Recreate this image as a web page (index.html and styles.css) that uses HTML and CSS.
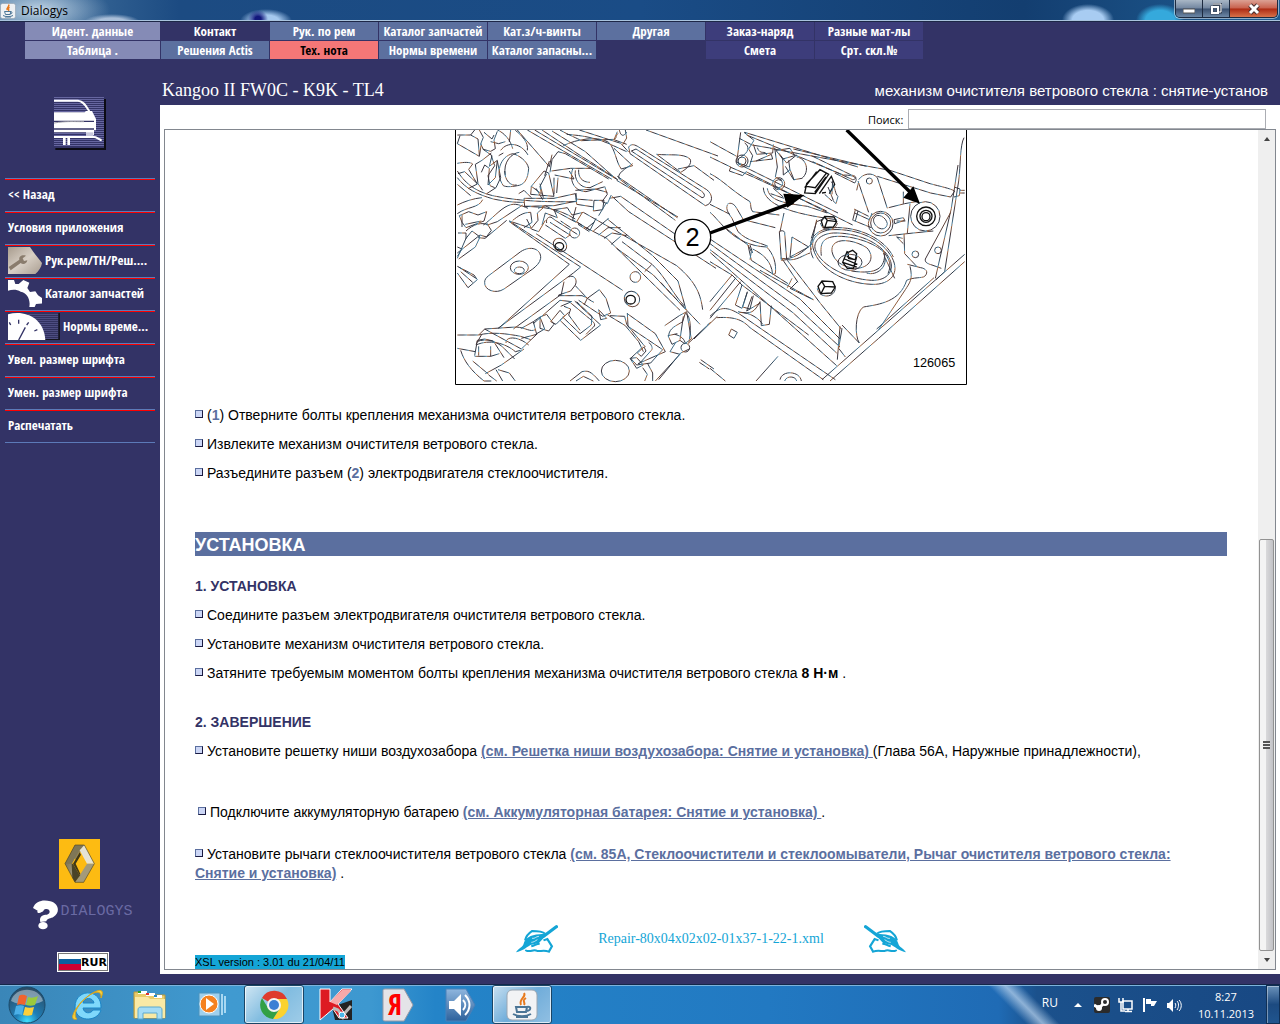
FILE: index.html
```html
<!DOCTYPE html>
<html lang="ru">
<head>
    <meta charset="UTF-8">
    <meta name="viewport" content="width=device-width, initial-scale=1.0">
    <title>Dialogys</title>
    <link rel="stylesheet" href="styles.css">
</head>
<body>
    <header class="titlebar">
        <svg class="java-small" viewBox="0 0 32 32" aria-hidden="true">
            <rect x="1" y="1" width="30" height="30" rx="4" fill="#eef1f4" stroke="#8795a5"/>
            <path d="M17 3c4 4-6 6-2 11M19 8c-5 3 0 4-2 8" fill="none" stroke="#e8791c" stroke-width="3"/>
            <path d="M9 17h13l-2 6h-9zM21 18c5-1 4 4-1 4M6 25c5 3 15 3 20 0M10 28h12" fill="none" stroke="#4b7596" stroke-width="2"/>
        </svg>
        <span class="titlebar-text">Dialogys</span>
        <div class="window-controls">
            <button type="button" class="win-btn" aria-label="Minimize">
                <svg width="12" height="12" viewBox="0 0 12 12"><rect x="0" y="6" width="12" height="4" fill="#fff" stroke="#555"/></svg>
            </button>
            <button type="button" class="win-btn" aria-label="Restore">
                <svg width="12" height="12" viewBox="0 0 12 12"><path d="M3 1h8v8H9M2 4h6v6H2z" fill="none" stroke="#3a4658" stroke-width="3"/><path d="M3 1h8v8H9" fill="none" stroke="#fff"/><path d="M2 4h6v6H2z" fill="none" stroke="#fff" stroke-width="2"/></svg>
            </button>
            <button type="button" class="win-btn win-close" aria-label="Close">
                <svg width="12" height="12" viewBox="0 0 12 12"><path d="M2 2l8 8M10 2l-8 8" stroke="#4a3030" stroke-width="5"/><path d="M2 2l8 8M10 2l-8 8" stroke="#fff" stroke-width="3"/></svg>
            </button>
        </div>
    </header>

    <nav class="tabs">
        <button type="button" class="tab tab-light">Идент. данные</button>
        <button type="button" class="tab tab-dark">Контакт</button>
        <button type="button" class="tab">Рук. по рем</button>
        <button type="button" class="tab">Каталог запчастей</button>
        <button type="button" class="tab">Кат.з/ч-винты</button>
        <button type="button" class="tab">Другая</button>
        <button type="button" class="tab tab-violet">Заказ-наряд</button>
        <button type="button" class="tab tab-violet">Разные мат-лы</button>
        <button type="button" class="tab tab-light row-start">Таблица .</button>
        <button type="button" class="tab">Решения Actis</button>
        <button type="button" class="tab tab-active">Тех. нота</button>
        <button type="button" class="tab">Нормы времени</button>
        <button type="button" class="tab">Каталог запасны...</button>
        <button type="button" class="tab tab-violet tab-estimate">Смета</button>
        <button type="button" class="tab tab-violet">Срт. скл.№</button>
    </nav>

    <div class="workspace">
        <aside class="sidebar">
            <svg class="car-icon" width="52" height="53" viewBox="0 0 156 159" aria-hidden="true">
                <path d="M4 6h152v153H4z" fill="#0c0c14"/>
                <path d="M0 0h150v153H0z" fill="#333366"/>
                <path d="M0 1.5h150M0 7.5h150M0 13.5h150M0 19.5h150M0 25.5h150M0 31.5h150M0 37.5h150M0 43.5h150M0 49.5h150M0 55.5h150M0 61.5h150M0 67.5h150M0 73.5h150M0 79.5h150M0 85.5h150M0 91.5h150M0 97.5h150M0 103.5h150M0 109.5h150M0 115.5h150M0 121.5h150M0 127.5h150M0 133.5h150M0 139.5h150M0 145.5h150" stroke="#6666a0" stroke-width="3"/>
                <path d="M0 11h72c20 2 25 20 34 32" fill="none" stroke="#fff" stroke-width="6"/>
                <path d="M0 46h92l4-4h18l12 24v34h-6v14H96v-8H0z" fill="#fff"/>
                <path d="M0 73h120M0 96h120" stroke="#333366" stroke-width="4"/>
                <path d="M0 78c36-6 60-4 90-4" fill="none" stroke="#a0a0a8" stroke-width="3"/>
                <path d="M96 106h22v12H96z" fill="#c8c8dc"/>
                <path d="M0 120h120c8 0 12 6 20 8v4" fill="none" stroke="#fff" stroke-width="6"/>
                <path d="M31 122v22M44 122v22" stroke="#fff" stroke-width="8"/>
            </svg>

            <div class="side-menu">
                <button type="button" class="side-btn">&lt;&lt; Назад</button>
                <button type="button" class="side-btn">Условия приложения</button>
                <button type="button" class="side-btn">
                    <svg width="34" height="27" viewBox="0 0 102 81" aria-hidden="true">
                        <defs><linearGradient id="paper" x1="0" y1="0" x2="1" y2="1"><stop offset="0" stop-color="#a89c8e"/><stop offset=".5" stop-color="#d8cfc5"/><stop offset="1" stop-color="#a99d90"/></linearGradient></defs>
                        <path d="M0 0h66c10 16 22 30 36 48-2 14-10 24-20 33H0z" fill="url(#paper)"/>
                        <path d="M2 60l32-22c-2-10 8-16 20-12l-10 8 4 8 10-2c-2 12-14 14-20 8L8 70z" fill="#8a7c6d"/>
                    </svg>
                    Рук.рем/ТН/Реш....
                </button>
                <button type="button" class="side-btn">
                    <svg width="34" height="27" viewBox="0 0 102 81" aria-hidden="true">
                        <path d="M0 0h18l4 12h10l14-12 18 8-6 16 8 12 16-2 8 12 18 12-2 12-22 2-4 9H64c4-22-6-42-26-46C26 27 12 28 0 32z" fill="#fff"/>
                    </svg>
                    Каталог запчастей
                </button>
                <button type="button" class="side-btn">
                    <svg width="52" height="27" viewBox="0 0 156 81" aria-hidden="true">
                        <path d="M60 0h90v78H60z" fill="#2b2b56"/>
                        <path d="M60 4h90M60 10h90M60 16h90M60 22h90M60 28h90M60 34h90M60 40h90M60 46h90M60 52h90M60 58h90M60 64h90M60 70h90M60 76h90" stroke="#55558c" stroke-width="3"/>
                        <path d="M151 0h5v81H60v-3h91z" fill="#14141f"/>
                        <path d="M0 4C50-10 108 14 112 81H0z" fill="#fff"/>
                        <path d="M32 81l20-38M32 20v12M62 28l-6 8M4 28l4 8M88 50l-9 4" stroke="#333366" stroke-width="4"/>
                    </svg>
                    Нормы време...
                </button>
                <button type="button" class="side-btn">Увел. размер шрифта</button>
                <button type="button" class="side-btn">Умен. размер шрифта</button>
                <button type="button" class="side-btn">Распечатать</button>
            </div>

            <div class="brand">
                <svg class="renault" width="41" height="50" viewBox="0 0 123 150" role="img" aria-label="Renault">
                    <defs><linearGradient id="metal" x1="0" y1="0" x2="1" y2="1"><stop offset="0" stop-color="#6b6143"/><stop offset="1" stop-color="#b9b296"/></linearGradient></defs>
                    <path d="M0 0h123v150H0z" fill="#fdbb12"/>
                    <path d="M48 18L18 74l30 56 9-18-19-38 24-46z" fill="url(#metal)"/>
                    <path d="M48 18h28L52 62l-7-6 14-26z" fill="#8d835f"/>
                    <path d="M48 18h28l8 20-22-6-20 36-4 6-20 0z" fill="#7f7656"/>
                    <path d="M76 18l30 56H84L62 34z" fill="#e6e3d2"/>
                    <path d="M84 74h22l-32 56H48l12-18z" fill="#a39a7a"/>
                    <path d="M38 74h6l20 34-16 22-8-14z" fill="#4a4327"/>
                    <path d="M62 40l20 34-20 34-20-34z" fill="#fdbb12"/>
                    <path d="M62 40l4 7-16 27 14 30-2 4-20-34z" fill="#3f3717"/>
                    <path d="M48 18h28l30 56-32 56H48L18 74z" fill="none" stroke="#54481f" stroke-width="2"/>
                </svg>
                <div class="dialogys">
                    <svg width="26" height="30" viewBox="0 0 78 90" aria-hidden="true">
                        <path d="M0 24C8 2 32-2 52 4c26 6 30 34 10 46-8 6-20 4-22 14l-18 2c-4-14 4-22 20-22 14-4 8-20-6-16-6 2-2 6-10 8-8 6-16 2-12-4z" fill="#fff"/>
                        <ellipse cx="30" cy="77" rx="14" ry="11" fill="#fff"/>
                    </svg>
                    <span class="dialogys-text">DIALOGYS</span>
                </div>
                <button type="button" class="currency"><span class="flag"></span>RUR</button>
            </div>
        </aside>

        <div class="main">
            <div class="doc-title">
                <h1 class="vehicle">Kangoo II FW0C - K9K - TL4</h1>
                <span class="subject">механизм очистителя ветрового стекла : снятие-установ</span>
            </div>
            <div class="panel">
                <form class="search">
                    <label for="search">Поиск:</label>
                    <input type="text" id="search" name="search">
                </form>
                <div class="viewer">
                    <main class="document">
                        <svg class="figure" viewBox="15 15 1536 765" role="img" aria-label="126065">
                            <defs>
                                <linearGradient id="ink" gradientUnits="userSpaceOnUse" x1="0" y1="0" x2="24" y2="14" spreadMethod="repeat">
                                    <stop offset="0" stop-color="#a8683c"/>
                                    <stop offset=".35" stop-color="#40343a"/>
                                    <stop offset=".65" stop-color="#2f3a48"/>
                                    <stop offset="1" stop-color="#4a86a8"/>
                                </linearGradient>
                            </defs>
                            <g class="ink">
                                <path d="M22 30h40l12-15M30 32l-8 24 66 38 6-38M62 30l22 12 4 48M88 15l12 22-8 20 8 16 22 6 14-8-4-26 10-26M102 22l24 20 6-12M122 50l24 6 20-6M98 72l28 20-8 32 24-18-6 52-22 22 4-50-14-10-10 22M76 118l20-12 28-22M76 118l8 58 14 20M124 92l10 30-20 30 6 30 14 6M142 108l10 50-14 30-28 18M182 15l-4 36M142 15c20 8 40 30 46 56M232 76c4-24-16-44-36-60"/>
                                <path d="M152 76c20-28 62-22 82 14M146 92l14-8M160 182c-26-36-10-88 28-96 18 4 44 22 48 44-2 34-14 50-34 52-20 4-34 4-42 0zM166 150c-8-40 20-66 42-68M164 138c0 28 18 46 36 42"/>
                                <path d="M22 115c20-4 40-4 46 2l-12 16 26 44-28 14M22 138c20 32 48 60 106 74 60 12 120 20 250 18M22 158c26 34 60 50 108 64 40 8 60 10 92 10M24 146l20-6 38 36M22 178l40 34M206 206l16-10 22 22M22 240c20-10 48-20 74-22M22 266c30-22 64-16 76-42M222 220h90l64-14 4 22-68 14-88 2zM220 244c60 2 100 4 156 38"/>
                                <path d="M28 272l28-12 28 10 26-10-8 28-54 20-12-16zM36 306v-36M46 298l48-10M48 318c20-20 50-28 64-18l30-10 76-50M100 300c26-18 50-48 74-58 22-10 40 0 60 8M22 400l26-60 18-22 24 18-14 30-50 36M22 384l68-54 20 6 60-50M84 338l22 2 18-24-14-22M24 324h24v18M22 366l14 6-14 22"/>
                                <path d="M244 184l38-46 14 6 16 70-70-6zM244 184l30 22-4-22 20-38M270 176l10 42M258 190l20 34M298 108l-14 44M300 142l6-38 18-24 22 6 130 76M304 138l58-8h60M314 150l58 12-14-24M312 158v50M324 158l-4 46M368 132c-10 30 0 66 40 68l54-14M376 136c-4 26 12 54 44 52l38-18M386 134c-2 22 10 38 34 38M376 196l60-4 36 10M378 204l2 34 52 8M464 184l8 24-16 22 16 6 12-26M432 226h30l-4 28-28 4zM470 232l-24 40M376 222l52 4"/>
                                <path d="M22 424l50 26 10 14-28 24M22 444l32 44M26 426l52 34M32 440l36 32"/>
                                <path d="M202 15l96 110 8-36M232 15l254 148M254 15l250 150M276 15l120 80c34 20 70 46 104 66M306 18l100 62 90 80M500 166l184 110M502 154l180 124M486 214l50 46 262 170M478 220l34-6 170 118"/>
                                <path d="M330 15c24 14 54 26 64 32l98-4c10-4 2-6 12-18M340 62c40-20 104-30 136-10 20 20 22 60 38 80l34-10M350 28c50 4 90 10 140 34l40 18M388 15l124 40 24 26M492 70l56 52M502 20l-10 24 38 14M526 15l4 24-12 20M508 15c4 20 14 20 22 6M588 15l216 78M620 88c40 4 80-4 100 14 8 14-10 30-28 40zM684 132l48-10 60 44M536 66c8-12 20-6 30 0l204 128c20 14 20 42-4 48L540 86zM544 78l14-6 196 126c12 8 12 20 2 20zM548 116c-20 14-50 30-40 46l168 124"/>
                                <path d="M178 288l66 22 20-24-2-22 18-16M178 288l214 138-22 18-226 166M178 290l180 128-210 190M188 286c16-12 30-24 54-24l4 30-24 16M244 310l-14-28M244 312l22 8 20-34M264 250l22-8 92 50M276 300l10-36 36 14-10-24 40-6 14 22 34-8 280 160c62 52 72 90 78 132M290 294c-4-16 12-24 20-12l72 46M286 300l60 40 14-10-60-38M362 308l-30-20M384 298l34 22M378 246l-10 38 42 26 24-20M396 264l-16 26 40 26 18-36M430 318l46-38M446 330l28-22h38M462 340l24-16 44 8M484 358l28-24M404 306l66 34 220 216M258 326l260 170M472 282l136 110 76 76 24 86-76-82M516 350l90 68c40 36 60 86 98 126M604 420l-20 20M500 370l110 80 140 148"/>
                                <circle cx="374" cy="324" r="15"/><circle cx="556" cy="456" r="16"/>
                                <ellipse cx="330" cy="360" rx="22" ry="18" transform="rotate(45 330 360)"/>
                                <ellipse cx="328" cy="364" rx="13" ry="11" class="bold"/>
                                <ellipse cx="546" cy="522" rx="24" ry="22" transform="rotate(45 546 522)"/>
                                <ellipse cx="542" cy="524" rx="14" ry="13" class="bold"/>
                                <path d="M116 452l96-72c30-20 62-8 60 20-2 14-14 24-24 32l-86 60c-24 16-60 4-58-20 0-8 4-14 12-20z"/>
                                <ellipse cx="208" cy="428" rx="27" ry="20"/><ellipse cx="208" cy="436" rx="15" ry="10"/>
                                <path d="M356 456c14-8 28 6 20 24l-14 18-36 12M342 470l-8 38-144 104M324 512h72c14 4 28 18 36 20M366 530l-36-4-80 70M376 482l36 38 36-26 20 26 14 44-24 10-72-48M412 520l-10 20M332 544l28-12 50 42c26 20 30 26 16 36l-18 18M342 544l20 8-6 18 34 46M356 562l-26 24 62 60 60-46-48-44-30-28M380 530l46 44-2 26-34 26-52-50M302 590l28-34 14 16-26 26zM270 576l20-8 22 30-16 20-26-8zM250 590l20-14 14 36-24 14M214 610l36-20 10 38-46 12"/>
                                <path d="M22 630h64l18-18 94-6c30 2 42 16 58 8M86 630c40-10 84-4 126 4l30 10M78 658l16-28M78 660c40-18 88-6 118 20l16-4M74 692l8-46 22-4 26 6 32 50M74 694h48l26-8M86 664v28M122 664v30M80 650c30-12 64 0 84 22l30 30M168 654c-2-22 38-20 68 6M104 612l110 60M214 672l48-46M22 670l54 10M32 676c10 32 30 60 70 92h22M68 708l48 40M106 746l48-26 68-48M138 734l20 34M144 734l34 10 18 24M116 750l24 18"/>
                                <ellipse cx="496" cy="738" rx="42" ry="32"/>
                                <path d="M360 768l36-28c18-4 26-2 52 28M378 768l22-14 30 14M446 554l24 26-18 4zM470 568l56 34 40 48 14 30M480 572l44 2 6 24 56 68M532 564l2 40 104 70-36 40-42 6-18-20 36-34M532 566l84 60 30 54-82 36M596 652c8 6 14 18 8 24l-36 40M540 700l20 30 20-10-20-22zM562 684l20-18 6 12-14 16zM578 728l14 20-8 20M592 714l16 30v24M656 632c2-24 24-30 42-42l8-26c20 10 16 62 10 92M710 560l14 82-20 14-14-10-24 12-12-26 28-6M674 628c20 4 30 16 32 28M700 574l-10 70M676 654l-16 26 30 8-74 80M718 672l-26 12-66 80M718 652l64-60-10 8M732 642l70-68M644 602l44-30 22-12M752 704l40 28M748 712l30 20"/>
                                <circle cx="706" cy="668" r="13"/>
                                <g transform="translate(780 0)">
                                    <path d="M0 50l80 44M84 116l300 148M0 96l62 30-4 12 40 14 10-12 320 160M60 126l70 30 220 102M104 22l340 104M110 30l290 120c20 0 50 4 34 24l-60-30M92 22l-12 90 38 14 10-34-12-20 16-26-30-24M88 40l38 20 60 10M104 54c16 10 12 30-10 40M130 58l10 30 48-4 2-26M142 68c8 24 24 6 28 22M120 110l68-8-4-14-46 20M194 68l8 58-6 30 20 10M198 76l42-6 14 22-36 10zM218 100l2 50 20-16 12 30 24-4c24-20 14-60-16-64M236 106l4 30M206 84l24 30 30-24M226 124l26 42M160 188c2 50 80 78 220 96M172 190c6 38 50 44 120 54l60 20M190 190l30 26M182 206l40 14M180 70l360 66 120 40c30 8 60 14 74 22l-12 18-60-12-160-50M250 72l220 52M304 92l120 58c22 4 12 14 4 14l-120-54"/>
                                    <circle cx="96" cy="108" r="18"/><circle cx="96" cy="108" r="12"/><circle cx="206" cy="176" r="18"/><circle cx="206" cy="176" r="12"/>
                                    <path class="bold" d="M284 204l6-28 40-42 26 14-40 58zM290 184l26 4 32-42M320 140l-36 48M328 206l36-52 10 24-16 28M348 156l-34 46M336 204l12-2"/>
                                    <path d="M364 170c14 20 10 36 20 44l-6 22-10-10M354 186l16 40M368 166l-2 42M344 208l22 20"/>
                                    <path d="M446 164c12-18 40-24 56-6l30 92M444 168l32 94M446 170l-6 26M432 252l44 22M434 264l44 20M430 286l54 22M436 254l-8 32M444 258l-8 30M478 286l8-22M536 248l48-12 34-6M600 236l-8 88M536 332l74-8 60-6M552 284l2 12 30-10-4-8zM560 288h26M580 200v36M582 326l2 60 38 40M578 340l-18-4 20 20"/>
                                    <circle cx="478" cy="168" r="9"/><circle cx="512" cy="296" r="37"/><circle cx="512" cy="294" r="30"/>
                                    <path d="M494 276c10-12 34 0 38 20-2 18-20 20-32 8-10-10-12-20-6-28z"/>
                                    <circle cx="646" cy="274" r="44"/><circle cx="648" cy="274" r="28" class="bold"/><circle cx="648" cy="274" r="18" class="bold"/><circle cx="648" cy="275" r="12" class="bold"/>
                                    <path d="M762 38c-12 22-10 80-16 130l-42 272-26 24M744 120l-20 130-48 210M732 186l18 6-2 20-16 4M750 196h14M750 204h14M722 262l-76 140c-2 10 6 14 20 18l28 10"/>
                                    <circle cx="616" cy="388" r="10"/><circle cx="684" cy="376" r="10"/>
                                    <path d="M310 372c-10-30 16-56 56-58 80-4 150 30 180 84 24 44-2 82-60 80-80-2-160-46-176-106z"/>
                                    <path d="M304 374c-12-34 20-62 64-66 80-4 156 34 182 88M316 374c-8-26 18-48 54-50 70-2 140 28 166 72 22 38-2 72-52 70-70-4-150-42-168-92zM334 392c-4-34 0-60 60-58 66 4 120 34 130 52 0 40-20 64-100 52M366 380c-6-44 60-40 104-12 26 26 12 62-34 62-40-4-64-22-70-50zM520 384c20 40-20 70-50 60M526 400l28 60M514 370c30 40 30 50 20 76"/>
                                    <path class="bold" d="M414 382l14-6 12 10-4 18-20-4zM410 394l28 12M404 402l38 16M398 412l42 14M412 378l-14 34 14 18h18l10-34"/>
                                    <ellipse cx="420" cy="412" rx="36" ry="24"/>
                                    <path class="bold" d="M334 288l10-14 28 2 8 14-10 16-30 2zM344 276l8 10 28 4M352 286l-8 22"/><path d="M332 294c4 28 46 24 50 0"/>
                                    <path class="bold" d="M324 484l12-16 32 2 8 16-12 18-32 2zM336 470l8 14 30 2M344 484l-10 20"/><path d="M322 490c4 32 54 30 54-2"/>
                                    <path d="M208 320c4-4 14-4 16 2l6 82-16 2zM222 264l-12 56M212 400c40 6 64-18 94-44M230 404c30 4 50-14 70-20M246 336l50 30-56 30zM304 340l16-50 20-8M320 284l-16 76M310 400c-10-20-8-30-8-40M232 406l62 80 38 50 62 76M214 398l50 74M264 468l-24 24M246 460l-14 28M150 436l160 88M240 490l70 34"/>
                                    <path d="M0 146c40 20 60 48 120 84 4 12 0 20 8 30l80 10M0 262c30 24 70 100 170 104 20 20 30 50 26 80l-8 2c-4-40-28-60-60-76M0 238l60 30M52 238c10-8 22 0 28 12l20 34 96 24M52 240c-6 14 6 28 14 40l18 40c30 30 60 30 90 44M114 360l10 20-4 24M120 360l8 24M50 312l64 48 10 46 110 70M0 342l270 180 120 120M0 356l260 190 130 120M0 374l250 190 130 120M0 382l380 340M0 410l66 40 30 30 200 150M66 450L0 530M78 458L0 556M92 470L0 580M96 480l-20 60 20 10 16-48M112 500l-14 46 22 6 10-40M126 514l-16 44 40-24M150 530l4 72 24-4 6-56M84 560c40 10 50 0 66-30M88 562c34 0 60 20 70 36M0 574c30-30 50-30 90-6l286 196M20 578c60-4 80 10 100 30l220 156M64 612l18 10-10 18-16-10zM204 694l-66 74M0 730l46 38M210 764c6-30 60-26 64 4M224 768c6-18 34-14 36 0M396 600l52 54M390 604l-8 100"/>
                                    <path d="M396 610l-10 60 20 26M448 654c-14-20-14-90 12-108 50-8 110-16 130-80 20-10 46-6 54-12 14-14 2-24-12-26l-40-10M600 424c10 40-2 50-14 70l-80 120M764 388l-428 376M764 410L506 640l-146 128M672 458L500 612"/>
                                </g>
                            </g>
                            <path d="M780 324l250-92M1190 15l190 186" stroke="#000" stroke-width="10"/>
                            <path d="M1064 210l-52 38-12-42zM1410 236l-50-18 30-34z"/>
                            <circle cx="728" cy="337" r="54" fill="#fff" stroke="#000" stroke-width="4"/>
                            <text class="callout" x="728" y="363">2</text>
                            <text class="fig-number" x="1389" y="726">126065</text>
                            <path d="M16.5 15v763.500h1533V15" fill="none" stroke="#000" stroke-width="3"/>
                        </svg>

                        <p class="step">(<b>1</b>) Отверните болты крепления механизма очистителя ветрового стекла.</p>
                        <p class="step">Извлеките механизм очистителя ветрового стекла.</p>
                        <p class="step">Разъедините разъем (<b>2</b>) электродвигателя стеклоочистителя.</p>

                        <h2>УСТАНОВКА</h2>

                        <h3>1. УСТАНОВКА</h3>
                        <p class="step">Соедините разъем электродвигателя очистителя ветрового стекла.</p>
                        <p class="step">Установите механизм очистителя ветрового стекла.</p>
                        <p class="step">Затяните требуемым моментом болты крепления механизма очистителя ветрового стекла <strong>8 Н·м</strong> .</p>

                        <h3 class="finish">2. ЗАВЕРШЕНИЕ</h3>
                        <p class="step">Установите решетку ниши воздухозабора <a href="#">(см. Решетка ниши воздухозабора: Снятие и установка) </a>(Глава 56A, Наружные принадлежности),</p>
                        <p class="step battery">Подключите аккумуляторную батарею <a href="#">(см. Аккумуляторная батарея: Снятие и установка) </a>.</p>
                        <p class="step wiper">Установите рычаги стеклоочистителя ветрового стекла <a href="#">(см. 85A, Стеклоочистители и стеклоомыватели, Рычаг очистителя ветрового стекла:<br>Снятие и установка)</a> .</p>

                        <div class="doc-nav">
                            <a href="#" aria-label="Назад">
                                <svg class="hand" viewBox="0 0 110 84" preserveAspectRatio="none"><use href="#hand"/></svg>
                            </a>
                            <span>Repair-80x04x02x02-01x37-1-22-1.xml</span>
                            <a href="#" aria-label="Вперед">
                                <svg class="hand" viewBox="0 0 110 84" preserveAspectRatio="none">
                                    <defs>
                                        <g id="hand">
                                            <path d="M106 5L72 34" stroke="#14a5d6" stroke-width="9" stroke-linecap="round"/>
                                            <path d="M0 82c6-12 18-16 20-26 4-16 16-26 42-28l12-2 4 6-18 22-22 6C24 70 16 78 0 82z" fill="#14a5d6"/>
                                            <path d="M24 46c2-12 10-22 18-28 18 0 28 2 34 8M72 46l10-4 12 22-8 16c-14-6-22 0-30-2-10-6-16 2-22 0-6 0-8 0-8-4M62 56c-10 0-12 6-22 8" fill="none" stroke="#14a5d6" stroke-width="6"/>
                                            <path d="M42 40c8 2 10-6 18-6M40 52c6 0 10-4 16-8" fill="none" stroke="#fff" stroke-width="2"/>
                                        </g>
                                    </defs>
                                    <use href="#hand" transform="matrix(-1 0 0 1 110 0)"/>
                                </svg>
                            </a>
                        </div>
                        <span class="version">XSL version : 3.01 du 21/04/11</span>
                    </main>
                    <div class="scrollbar">
                        <button type="button" class="scroll-arrow" aria-label="Вверх"><span class="arrow-up"></span></button>
                        <div class="scroll-track">
                            <div class="scroll-thumb"><span class="grip"></span></div>
                        </div>
                        <button type="button" class="scroll-arrow" aria-label="Вниз"><span class="arrow-down"></span></button>
                    </div>
                </div>
            </div>
        </div>
    </div>

    <footer class="taskbar">
        <button type="button" class="start" aria-label="Пуск">
            <svg width="38" height="38" viewBox="0 0 38 38">
                <defs><radialGradient id="orb" cx=".5" cy=".95" r=".9"><stop offset="0" stop-color="#3fe0ff"/><stop offset=".35" stop-color="#1f7fb8"/><stop offset="1" stop-color="#2a4c66"/></radialGradient></defs>
                <circle cx="19" cy="19" r="18" fill="url(#orb)" stroke="#1b4a6a"/>
                <path d="M3 15C7 0 31 0 35 15c-10 5-22 5-32 0z" fill="#fff" opacity=".4"/>
                <path d="M11 10c3-2 5-1 8 0l-2 9c-3-1-6-1-8 0z" fill="#f0642d"/>
                <path d="M20 11c3 1 6 1 10-1l-3 9c-3 1-6 1-9 0z" fill="#9bca3c"/>
                <path d="M8 20c3-1 6-1 8 0l-2 9c-3-1-5-1-8 0z" fill="#4bb0e8"/>
                <path d="M17 21c3 1 6 1 9 0l-2 8c-3 1-6 1-9 0z" fill="#fcd03b"/>
            </svg>
        </button>
        <button type="button" class="task" aria-label="Internet Explorer">
            <svg width="32" height="34" viewBox="0 0 32 34">
                <path d="M3 19c0-19 27-19 26 1H11c1 6 8 6 10 2h8c-4 13-26 12-26-3zM11 15h11c-1-6-10-6-11 0z" fill="#7fd8fb" stroke="#1b86c8"/>
                <path d="M5 31c-10 3-1-14 10-22C25 1 34-1 29 10c1-9-8-6-14-1C6 16 0 27 5 31z" fill="#fbd23c" stroke="#d8a51c"/>
            </svg>
        </button>
        <button type="button" class="task" aria-label="Проводник">
            <svg width="34" height="32" viewBox="0 0 34 32">
                <path d="M1 3h12l2 3h17v23H1z" fill="#e9cc6a" stroke="#b9983c"/>
                <path d="M5 2h9v3H5zM13 4h9v3h-9zM21 6h8v3h-8z" fill="#fff"/>
                <path d="M5 2h3v2H5z" fill="#2aa02a"/><path d="M13 4h3v2h-3z" fill="#d33"/><path d="M21 6h3v2h-3z" fill="#28c"/>
                <path d="M2 8h13l2 2h15v19H2z" fill="#f9e9a5"/>
                <path d="M5 30v-9c0-2 1-3 3-3h18c2 0 3 1 3 3v9h-5v-6H10v6z" fill="#a5dcf5" stroke="#5aa9d0"/>
            </svg>
        </button>
        <button type="button" class="task" aria-label="Media Player">
            <svg width="30" height="28" viewBox="0 0 30 28">
                <path d="M2 2h21v23H2z" fill="#9fd0ec" stroke="#4c93bd"/><path d="M25 3v21M28 5v17" stroke="#a8d8f2" stroke-width="2"/>
                <circle cx="12" cy="13" r="9" fill="#f58220" stroke="#fff"/><path d="M9 7l8 6-8 6z" fill="#fff"/>
            </svg>
        </button>
        <button type="button" class="task task-open" aria-label="Chrome">
            <svg width="30" height="30" viewBox="0 0 30 30">
                <path d="M15 15L3 8a14 14 0 0 1 25 1z" fill="#de3b2d"/>
                <path d="M15 9h13A14 14 0 0 1 14 29l7-11z" fill="#fbd22f"/>
                <path d="M3 8l6 10 12 0-7 11A14 14 0 0 1 3 8z" fill="#32a046"/>
                <circle cx="15" cy="15" r="7" fill="#f4f4f4"/><circle cx="15" cy="15" r="5" fill="#3b7fd4"/>
            </svg>
        </button>
        <button type="button" class="task" aria-label="Kaspersky">
            <svg width="34" height="34" viewBox="0 0 34 34">
                <path d="M13 19L33 12v20H16z" fill="#222"/>
                <path d="M1 1h10v13L23 1h10L19 16l10 14h-9l-6-9-13 11z" fill="#dd1a22" stroke="#fff"/>
                <path d="M18 17l14-14-1-1h-8L11 14z" fill="#f7a9a9"/>
                <path d="M14 20l5 2 6 9M25 26l7-8" fill="none" stroke="#bbb" stroke-width="3"/><circle cx="23" cy="27" r="3" fill="#4db7ea" stroke="#fff"/>
            </svg>
        </button>
        <button type="button" class="task" aria-label="Яндекс">
            <svg width="32" height="34" viewBox="0 0 32 34">
                <path d="M3 1h19l9 16-9 16H3c-2 0-2-1-2-2V3c0-1 0-2 2-2z" fill="#e4e4e8" stroke="#9a9aa5"/>
                <text class="ya" x="13" y="27">Я</text>
            </svg>
        </button>
        <button type="button" class="task" aria-label="Звук">
            <svg width="32" height="34" viewBox="0 0 32 34">
                <defs><linearGradient id="sound" x1="0" y1="0" x2="0" y2="1"><stop offset="0" stop-color="#8fb6de"/><stop offset="1" stop-color="#2d629c"/></linearGradient></defs>
                <path d="M2 1h20l9 16-9 16H2z" fill="url(#sound)" stroke="#4a80b8"/>
                <path d="M5 13h5l7-7v22l-7-7H5z" fill="#fff"/><path d="M19 12c3 3 3 7 0 10M21 7c6 6 6 14 0 20" fill="none" stroke="#fff" stroke-width="2"/>
            </svg>
        </button>
        <button type="button" class="task task-open" aria-label="Dialogys">
            <svg width="32" height="32" viewBox="0 0 32 32">
                <rect x="1" y="1" width="30" height="30" rx="5" fill="#f2f3f5" stroke="#9aa6b2"/>
                <path d="M18 4c3 4-6 6-3 12M20 9c-5 3 0 4-2 7" fill="none" stroke="#e8791c" stroke-width="2"/>
                <path d="M10 18h11l-1 5h-9zM21 18c5-1 4 4-1 4M7 25c5 3 13 3 18 0M10 28h12" fill="none" stroke="#4b7596" stroke-width="2"/>
            </svg>
        </button>

        <div class="tray">
            <span class="lang">RU</span>
            <span class="tray-arrow"></span>
            <svg width="16" height="16" viewBox="0 0 16 16" aria-hidden="true">
                <rect width="16" height="16" rx="2" fill="#2b2b2b"/>
                <circle cx="11" cy="5" r="3" fill="none" stroke="#fff" stroke-width="2"/><circle cx="5" cy="11" r="3" fill="#fff"/>
                <path d="M0 8l5 3 4-4" fill="none" stroke="#fff" stroke-width="3"/>
            </svg>
            <svg width="16" height="16" viewBox="0 0 16 16" aria-hidden="true">
                <path d="M5 4h9v8H5zM7 14.5h7M10 12v2" fill="none" stroke="#fff" stroke-width="1.5"/>
                <path d="M1 1v4h4V1M3 5v9h4" fill="none" stroke="#fff" stroke-width="1.5"/>
            </svg>
            <svg width="16" height="16" viewBox="0 0 16 16" aria-hidden="true">
                <path d="M2 1v14" stroke="#fff" stroke-width="2"/><path d="M4 2h5v2h6l-3 5H9V7H4z" fill="#fff"/>
            </svg>
            <svg width="16" height="16" viewBox="0 0 16 16" aria-hidden="true">
                <path d="M1 6h2l4-4v13l-4-4H1z" fill="#fff"/><path d="M9 6c1 1 1 3 0 5M11 4c2 2 2 6 0 9M13 3c3 3 3 8 0 11" fill="none" stroke="#fff"/>
            </svg>
            <time class="clock" datetime="2013-11-10T08:27">8:27<br>10.11.2013</time>
        </div>
        <button type="button" class="show-desktop" aria-label="Свернуть все окна"></button>
    </footer>
</body>
</html>
```

FILE: styles.css
```css
* {
    box-sizing: border-box;
}
body {
    margin: 0;
    min-height: 100vh;
    display: flex;
    flex-direction: column;
    background: #333366;
    font-family: "Liberation Sans", Arial, sans-serif;
    font-size: 14px;
}
button {
    margin: 0;
    padding: 0;
    border: none;
    background: none;
    font: inherit;
    color: inherit;
    cursor: pointer;
}
svg {
    display: block;
    flex: none;
}

/* window title */
.titlebar {
    display: flex;
    align-items: center;
    height: 22px;
    border-bottom: 1px solid #1d2747;
    box-shadow: inset 0 -1px #a9c3dd;
    background:
        radial-gradient(ellipse 70px 28px at 40px 10px, rgba(220, 234, 245, 0.8), transparent),
        radial-gradient(ellipse 28px 8px at 112px 22px, rgba(200, 215, 235, 0.8) 50%, transparent),
        radial-gradient(ellipse 10px 9px at 258px 19px, #12187c 30%, transparent),
        radial-gradient(ellipse 26px 12px at 266px 21px, #a5c8ee 50%, transparent),
        radial-gradient(ellipse 26px 16px at 1088px 20px, #a8ccf2 60%, transparent),
        radial-gradient(ellipse 24px 16px at 1160px 20px, #35a9dc 60%, transparent),
        linear-gradient(90deg, #4b7aa4, #1c4b82 14%, #1a4c86 50%, #133e70 80%, #1f5d93);
}
.java-small {
    width: 16px;
    height: 16px;
    margin: 0 5px 0 0;
}
.titlebar-text {
    font: 12px "Open Sans", "Noto Sans", sans-serif;
    color: #000;
}
.window-controls {
    display: flex;
    align-self: flex-start;
    margin: 0 2px 0 auto;
    border: 1px solid #1d2b40;
    border-top: none;
    border-radius: 0 0 5px 5px;
    box-shadow: 0 0 0 1px rgba(255, 255, 255, 0.5);
    overflow: hidden;
}
.win-btn {
    display: flex;
    align-items: center;
    justify-content: center;
    width: 27px;
    height: 17px;
    border-right: 1px solid #1d2b40;
    background: linear-gradient(#a9b7c6, #7286a0 48%, #3a506f 52%, #6d88a6);
}
.win-close {
    width: 47px;
    border-right: none;
    background: linear-gradient(#dca194, #c8604c 48%, #ad2a13 52%, #d8724a);
}

/* top tabs */
.tabs {
    display: grid;
    grid-template-columns: 135px repeat(7, 108px);
    grid-auto-rows: 18px;
    gap: 1px;
    padding: 0 25px;
}
.tab {
    overflow: hidden;
    background: #5c709f;
    color: #fff;
    font: bold 13px/18px "Open Sans Condensed", Roboto, sans-serif;
    white-space: nowrap;
}
.tab-light {
    background: #858bb6;
}
.tab-dark {
    background: #333366;
}
.tab-violet {
    background: #3d3d7b;
}
.tab-active {
    background: #f47777;
    color: #000;
}
.row-start {
    grid-column: 1;
}
.tab-estimate {
    grid-column: 7;
}

.workspace {
    flex: 1;
    display: flex;
}

/* left column */
.sidebar {
    flex: none;
    width: 160px;
    display: flex;
    flex-direction: column;
    padding: 38px 5px 12px;
}
.car-icon {
    margin: 0 0 28px 49px;
}
.side-menu {
    border-bottom: 1px solid #5c7ab8;
}
.side-btn {
    display: flex;
    align-items: center;
    gap: 3px;
    width: 100%;
    height: 33px;
    padding: 0 3px 2px;
    border-top: 1px solid #5c7ab8;
    box-shadow: inset 0 1px #ff0000;
    color: #fff;
    font: bold 13px "Open Sans Condensed", Roboto, sans-serif;
    white-space: nowrap;
}
.brand {
    display: flex;
    flex-direction: column;
    align-items: center;
    margin-top: auto;
    padding-left: 6px;
}
.renault {
    margin-right: 8px;
}
.dialogys {
    display: flex;
    align-items: flex-start;
    gap: 1px;
    margin: 11px 0 22px;
}
.dialogys-text {
    color: #6a6aa3;
    font: 15px/24px "Liberation Mono", monospace;
}
.currency {
    display: flex;
    align-items: center;
    width: 52px;
    height: 20px;
    border: 1px solid #fff;
    outline: 1px solid #777;
    outline-offset: -2px;
    background: #fff;
    color: #000;
    font: bold 11px "DejaVu Sans", sans-serif;
}
.flag {
    width: 22px;
    height: 16px;
    margin-left: 1px;
    background: linear-gradient(#fff 30%, #0a5fa0 30%, #0a5fa0 64%, #cc0033 64%);
}

/* document area */
.main {
    flex: 1;
    min-width: 0;
    display: flex;
    flex-direction: column;
    padding-bottom: 10px;
}
.doc-title {
    display: flex;
    justify-content: space-between;
    align-items: flex-end;
    height: 46px;
    padding: 0 12px 4px 2px;
    color: #fff;
}
.vehicle {
    margin: 0;
    font: 18px/22px "Liberation Serif", serif;
}
.subject {
    font-size: 15px;
    line-height: 20px;
}
.panel {
    flex: 1;
    display: flex;
    flex-direction: column;
    padding: 4px;
    background: #fff;
}
.search {
    display: flex;
    align-items: center;
    justify-content: flex-end;
    gap: 5px;
    height: 20px;
    padding-right: 10px;
    font: 11px "Open Sans", "Noto Sans", sans-serif;
}
.search input {
    width: calc(33% - 6px);
    height: 20px;
    border: 1px solid #abadb3;
    background: #fff;
}
.viewer {
    flex: 1;
    display: flex;
    border: 1px solid #82878f;
}
.document {
    flex: 1;
    min-width: 0;
    display: flex;
    flex-direction: column;
    padding: 0 31px 0 30px;
    line-height: 19px;
}
.figure {
    align-self: center;
    width: 512px;
    height: 255px;
    margin-bottom: 11px;
}
.ink {
    fill: none;
    stroke: url(#ink);
    stroke-width: 3;
}
.ink .bold {
    stroke: #111;
    stroke-width: 4;
}
.callout {
    font-size: 76px;
    text-anchor: middle;
}
.fig-number {
    font-size: 38px;
}
.step {
    margin: 10px 0 0;
}
.step::before {
    content: "";
    display: inline-block;
    width: 6px;
    height: 6px;
    margin-right: 4px;
    border: 1px solid #5b6f9f;
    border-right-color: #1a1a40;
    border-bottom-color: #1a1a40;
    background: #ccd6f5;
    vertical-align: 2px;
}
.step b,
.step a {
    color: #5b6f9f;
    font-weight: bold;
}
.document h2 {
    margin: 49px 0 11px;
    padding-top: 2px;
    background: #5b6f9f;
    color: #fff;
    font-size: 18px;
    line-height: 22px;
}
.document h3 {
    margin: 10px 0 0;
    color: #333366;
    font-size: 14px;
    line-height: 19px;
}
.document .finish {
    margin-top: 30px;
}
.battery {
    margin: 42px 0 0 3px;
}
.wiper {
    margin-top: 23px;
}
.doc-nav {
    display: flex;
    justify-content: center;
    align-items: center;
    gap: 40px;
    margin-top: 42px;
    color: #14a5d6;
    font: 14px "Liberation Serif", serif;
}
.hand {
    width: 42px;
    height: 28px;
}
.version {
    align-self: flex-start;
    margin-top: 2px;
    background: #14a5d6;
    color: #000;
    font-size: 11px;
    line-height: 14px;
}

.scrollbar {
    flex: none;
    width: 17px;
    display: flex;
    flex-direction: column;
    background: #efefef;
}
.scroll-arrow {
    display: flex;
    align-items: center;
    justify-content: center;
    height: 18px;
}
.arrow-up,
.arrow-down {
    border: 3px solid transparent;
}
.arrow-up {
    border-top: none;
    border-bottom: 4px solid #444;
}
.arrow-down {
    border-bottom: none;
    border-top: 4px solid #444;
}
.scroll-track {
    flex: 1;
    display: flex;
    flex-direction: column;
    justify-content: flex-end;
}
.scroll-thumb {
    display: flex;
    align-items: center;
    justify-content: center;
    height: calc(51% + 2px);
    margin: 0 1px;
    border: 1px solid #929292;
    border-radius: 2px;
    background: linear-gradient(90deg, #f4f4f4 45%, #d8d8da 50%, #c2c2c6);
}
.grip {
    width: 7px;
    height: 8px;
    background: repeating-linear-gradient(#555 0 2px, #eee 2px 3px);
}

/* taskbar */
.taskbar {
    display: flex;
    align-items: stretch;
    gap: 2px;
    height: 40px;
    border-top: 1px solid #14284a;
    box-shadow: inset 0 1px #7db3dc;
    background: linear-gradient(90deg, #3a86b8, #409ad0 18%, #3d98d0 29%, #2484c8 34%, #2279c2 60%, #1f6bb5 78%, #1b518c 81%, #184883);
}
.start {
    display: flex;
    align-items: center;
    justify-content: center;
    width: 54px;
    margin-right: 2px;
}
.task {
    display: flex;
    align-items: center;
    justify-content: center;
    width: 60px;
}
.task-open {
    border: 1px solid #1a4566;
    border-radius: 3px;
    box-shadow: inset 0 0 0 1px rgba(255, 255, 255, 0.7);
    background: linear-gradient(135deg, rgba(255, 255, 255, 0.75), rgba(255, 255, 255, 0.35) 50%, rgba(255, 255, 255, 0.5));
}
.ya {
    fill: #f00;
    font: bold 28px "Open Sans Condensed", "Liberation Sans", sans-serif;
    text-anchor: middle;
}
.tray {
    flex: 1;
    display: flex;
    align-items: center;
    justify-content: flex-end;
    gap: 8px;
    padding-right: 10px;
    background: linear-gradient(45deg, transparent 334px, rgba(190, 215, 240, 0.7) 346px, transparent 358px);
    color: #fff;
    font: 12px "Open Sans", "Noto Sans", sans-serif;
}
.lang {
    margin: 0 8px 4px 0;
}
.tray-arrow {
    margin-right: 4px;
    border: 4px solid transparent;
    border-top: none;
    border-bottom-color: #fff;
}
.clock {
    margin-left: 8px;
    font-size: 11px;
    line-height: 17px;
    text-align: center;
}
.show-desktop {
    width: 14px;
    border: 1px solid #0f2f55;
    box-shadow: inset 1px 1px rgba(255, 255, 255, 0.4);
    background: linear-gradient(#6b92ba, #1c4a80 50%, #20558f);
}
```
